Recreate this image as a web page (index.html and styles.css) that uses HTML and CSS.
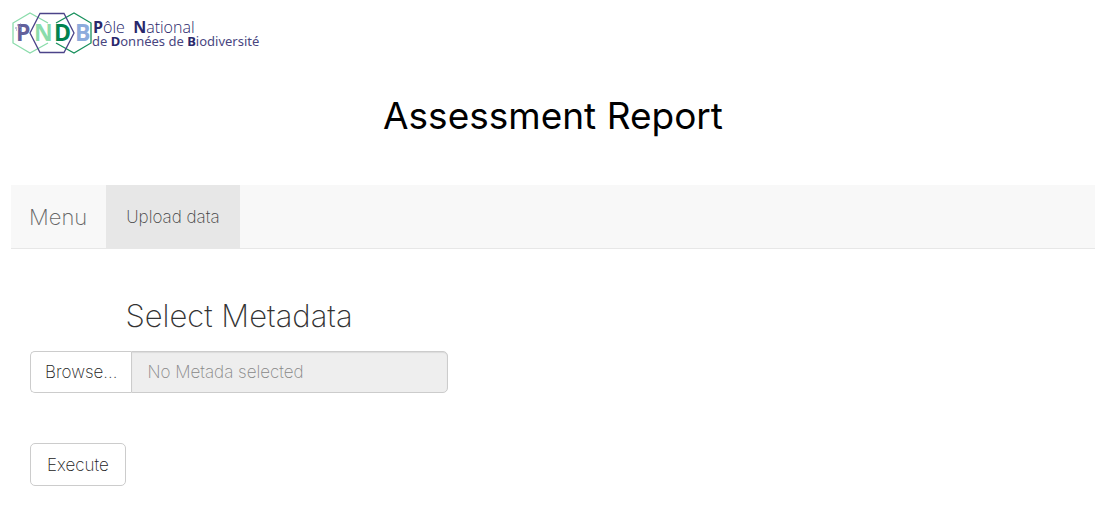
FILE: index.html
```html
<!DOCTYPE html>
<html lang="en">
<head>
<meta charset="utf-8">
<title>Assessment Report</title>
<link rel="stylesheet" href="styles.css">
</head>
<body>
<header class="header">
  <svg class="logo" width="260" height="48" viewBox="0 0 260 48" role="img" aria-label="Pôle National de Données de Biodiversité">
    <g class="logo-letters">
      <text x="5" y="32" fill="#62609b">P</text>
      <text x="23" y="32" fill="#8bdcab">N</text>
      <text x="43" y="32" fill="#00824f">D</text>
      <text x="64" y="32" fill="#8cabdc">B</text>
    </g>
    <g fill="none" stroke-width="1.3">
      <path d="M37 14 19 4 2 14V34L19 44 37 34" stroke="#8bdcab"/>
      <path d="M45 14 63 4 80 14V34L63 44 45 34" stroke="#17905c"/>
      <path d="M29 4.500H53L63 24 53 43.500H29L19 24Z" stroke="#4b4389"/>
    </g>
    <path d="M4 19h2M6 16h1M8 18h2M5 21h1M9 21h1M7 20h1M9 15h1" stroke="#8c8ab8" stroke-width="1.200"/>
    <g class="logo-name">
      <text class="logo-line-light" x="82" y="24" font-size="16" xml:space="preserve"><tspan class="initial">P</tspan>ôle  <tspan class="initial">N</tspan>ational</text>
      <text x="81" y="37" font-size="13"><tspan>de </tspan><tspan class="initial">D</tspan>onnées de <tspan class="initial">B</tspan>iodiversité</text>
    </g>
  </svg>
  <h1 class="title">Assessment Report</h1>
</header>
<nav class="navbar">
  <span class="brand">Menu</span>
  <a class="tab" href="#upload" aria-current="page">Upload data</a>
</nav>
<main class="panel" id="upload">
  <form class="form">
    <h2 class="subtitle"><label for="metadata">Select Metadata</label></h2>
    <div class="file-group">
      <button class="button browse" type="button">Browse...</button>
      <input class="file-name" id="metadata" type="text" placeholder="No Metada selected" readonly>
    </div>
    <button class="button execute" type="button">Execute</button>
  </form>
</main>
</body>
</html>
```
FILE: styles.css
```css
* {
  box-sizing: border-box;
}

body {
  margin: 0;
  padding: 9px 15px 0 11px;
  background: #fff;
  color: #333;
  font-family: Inter, "Liberation Sans", sans-serif;
  font-size: 17px;
  font-weight: 200;
  line-height: 24px;
}

.logo {
  display: block;
}

.logo-letters {
  font: 700 23px "Open Sans", sans-serif;
}

.logo-name {
  fill: #49467f;
  font-family: "Noto Sans", "Open Sans", sans-serif;
  font-weight: 400;
}

.logo-line-light {
  fill: #29286b;
  font-family: "Open Sans", sans-serif;
  font-weight: 300;
}

.initial {
  fill: #29286b;
  font-weight: 700;
}

.title {
  margin: 32px 0 42px;
  color: #000;
  font-size: 37px;
  font-weight: 400;
  line-height: 54px;
  text-align: center;
}

.navbar {
  display: flex;
  height: 64px;
  border-bottom: 1px solid #e7e7e7;
  background: #f8f8f8;
}

.brand,
.tab {
  display: flex;
  align-items: center;
  padding: 0 19px;
}

.brand {
  padding-left: 18px;
  color: #666;
  font-size: 22px;
}

.tab {
  padding: 0 20px;
  background: #e7e7e7;
  color: #444;
  text-decoration: none;
}

.panel {
  padding: 47px 19px 24px;
}

.form {
  max-width: 418px;
}

.subtitle {
  margin: 0 0 15px;
  font-size: 31px;
  font-weight: 200;
  line-height: 40px;
  text-align: center;
}

.file-group {
  display: flex;
  margin-bottom: 50px;
}

.button {
  padding: 8px 15px;
  border: 1px solid #ccc;
  border-radius: 5px;
  background: #fff;
  color: #222;
  font: inherit;
}

.browse {
  padding: 8px 14px;
  border-right: 0;
  border-radius: 5px 0 0 5px;
}

.execute {
  padding: 9px 16px 8px;
}

.file-name {
  flex: 1;
  min-width: 0;
  padding: 8px 15px;
  border: 1px solid #ccc;
  border-radius: 0 5px 5px 0;
  background: #eee;
  box-shadow: inset 0 1px 1px rgba(0, 0, 0, 0.08);
  color: #555;
  font: inherit;
}

.file-name::placeholder {
  color: #888;
}
```
